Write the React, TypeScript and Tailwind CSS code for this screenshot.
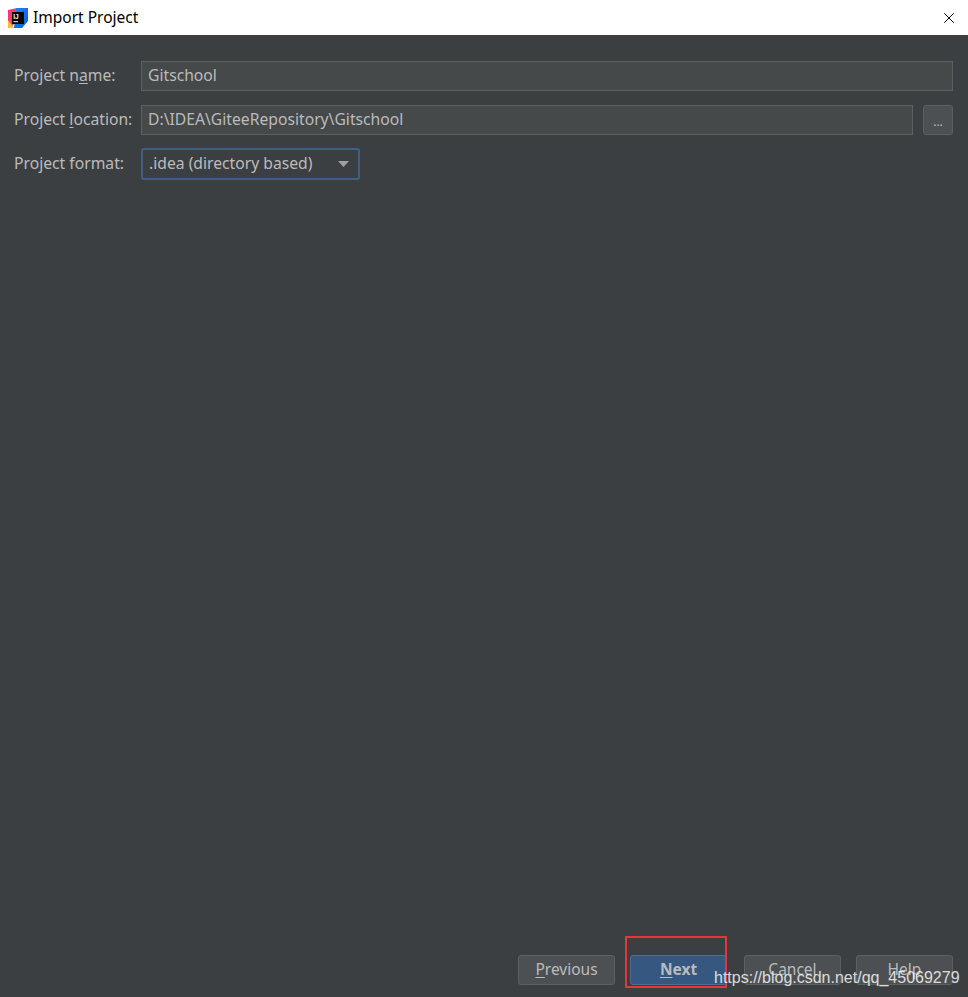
import { X } from "lucide-react";

const font = { fontFamily: '"Noto Sans", "Open Sans", sans-serif' };

const IdeaLogo = () => (
  <svg width="20" height="20" viewBox="0 0 20 20" className="shrink-0">
    <defs>
      <linearGradient id="ijA" x1="0" y1="0" x2="1" y2="1">
        <stop offset="0" stopColor="#fc318c" />
        <stop offset="0.5" stopColor="#e9475b" />
        <stop offset="1" stopColor="#fe7f3b" />
      </linearGradient>
      <linearGradient id="ijB" x1="0" y1="0" x2="1" y2="1">
        <stop offset="0" stopColor="#1e84fd" />
        <stop offset="1" stopColor="#0f5cdb" />
      </linearGradient>
    </defs>
    <polygon points="0,2 9,0 12,8 3,20 0,18" fill="url(#ijA)" />
    <polygon points="8,0 20,0 20,13 14,20 6,20" fill="url(#ijB)" />
    <polygon points="0,12 6,20 0,20" fill="#fdb93a" />
    <rect x="4" y="4" width="12" height="12" fill="#000" />
    <text x="5.2" y="11.2" fill="#fff" fontSize="6.5" fontWeight="700" fontFamily="Liberation Sans, sans-serif">
      IJ
    </text>
    <rect x="5.5" y="13.2" width="4.5" height="1" fill="#fff" />
  </svg>
);

const Field = ({ value, className = "" }: { value: string; className?: string }) => (
  <div
    className={`flex h-[30px] items-center border border-[#5e6060] bg-[#45494a] px-[6px] text-[15.7px] text-[#bbbbbb] ${className}`}
  >
    {value}
  </div>
);

const Button = ({
  children,
  primary = false,
}: {
  children: React.ReactNode;
  primary?: boolean;
}) => (
  <div
    className={`flex h-[30px] w-[97px] items-center justify-center rounded-[3px] border text-[15.5px] ${
      primary
        ? "border-[#4c708c] bg-[#365880] font-bold text-[#bbbbbb]"
        : "border-[#5e6060] bg-[#4c5052] text-[#bbbbbb]"
    }`}
  >
    {children}
  </div>
);

export default function App() {
  return (
    <div className="relative flex h-[997px] w-[968px] flex-col bg-[#3c3f41]" style={font}>
      {/* title bar */}
      <div className="flex h-[35px] items-center bg-white pl-[8px] pr-[10px]">
        <IdeaLogo />
        <span className="ml-[5px] text-[15.5px] text-black">Import Project</span>
        <X className="ml-auto h-[18px] w-[18px] text-black" strokeWidth={1.3} />
      </div>

      {/* form */}
      <div className="flex-1 pl-[14px] pr-[15px] pt-[26px]">
        <div className="grid grid-cols-[127px_1fr] items-center gap-y-[14px] text-[15.7px] text-[#bbbbbb]">
          <span className="-mt-[1px]">
            Project n<span className="underline underline-offset-2">a</span>me:
          </span>
          <Field value="Gitschool" />

          <span className="-mt-[1px]">
            Project <span className="underline underline-offset-2">l</span>ocation:
          </span>
          <div className="flex gap-[10px]">
            <Field value="D:\IDEA\GiteeRepository\Gitschool" className="flex-1" />
            <div className="flex h-[30px] w-[30px] items-end justify-center rounded-[3px] border border-[#5e6060] bg-[#4c5052] pb-[6px] text-[12px] leading-none text-[#bbbbbb]">
              ...
            </div>
          </div>

          <span className="-mt-[1px]">Project format:</span>
          <div className="-mt-[1px] flex h-[32px] w-[219px] items-center justify-between rounded-[3px] border-2 border-[#3d6185] bg-[#3c3f41] pl-[6px] pr-[9px]">
            <span>.idea (directory based)</span>
            <svg width="11" height="6" viewBox="0 0 11 6">
              <polygon points="0,0 11,0 5.5,6" fill="#a0a0a0" />
            </svg>
          </div>
        </div>
      </div>

      {/* bottom buttons */}
      <div className="flex justify-end gap-[15px] pb-[12px] pr-[15px]">
        <Button>
          <span className="underline underline-offset-2">P</span>revious
        </Button>
        <Button primary>
          <span className="underline underline-offset-2">N</span>ext
        </Button>
        <div className="ml-[2px]">
          <Button>Cancel</Button>
        </div>
        <Button>Help</Button>
      </div>

      {/* annotation overlay */}
      <div className="absolute left-[625px] top-[936px] h-[52px] w-[102px] border-2 border-[#e8353a]" />
      <span
        className="absolute left-[714px] top-[970px] text-[16px] leading-none whitespace-nowrap text-white/80"
        style={{ fontFamily: '"Liberation Sans", Arial, sans-serif' }}
      >
        https://blog.csdn.net/qq_45069279
      </span>
    </div>
  );
}
